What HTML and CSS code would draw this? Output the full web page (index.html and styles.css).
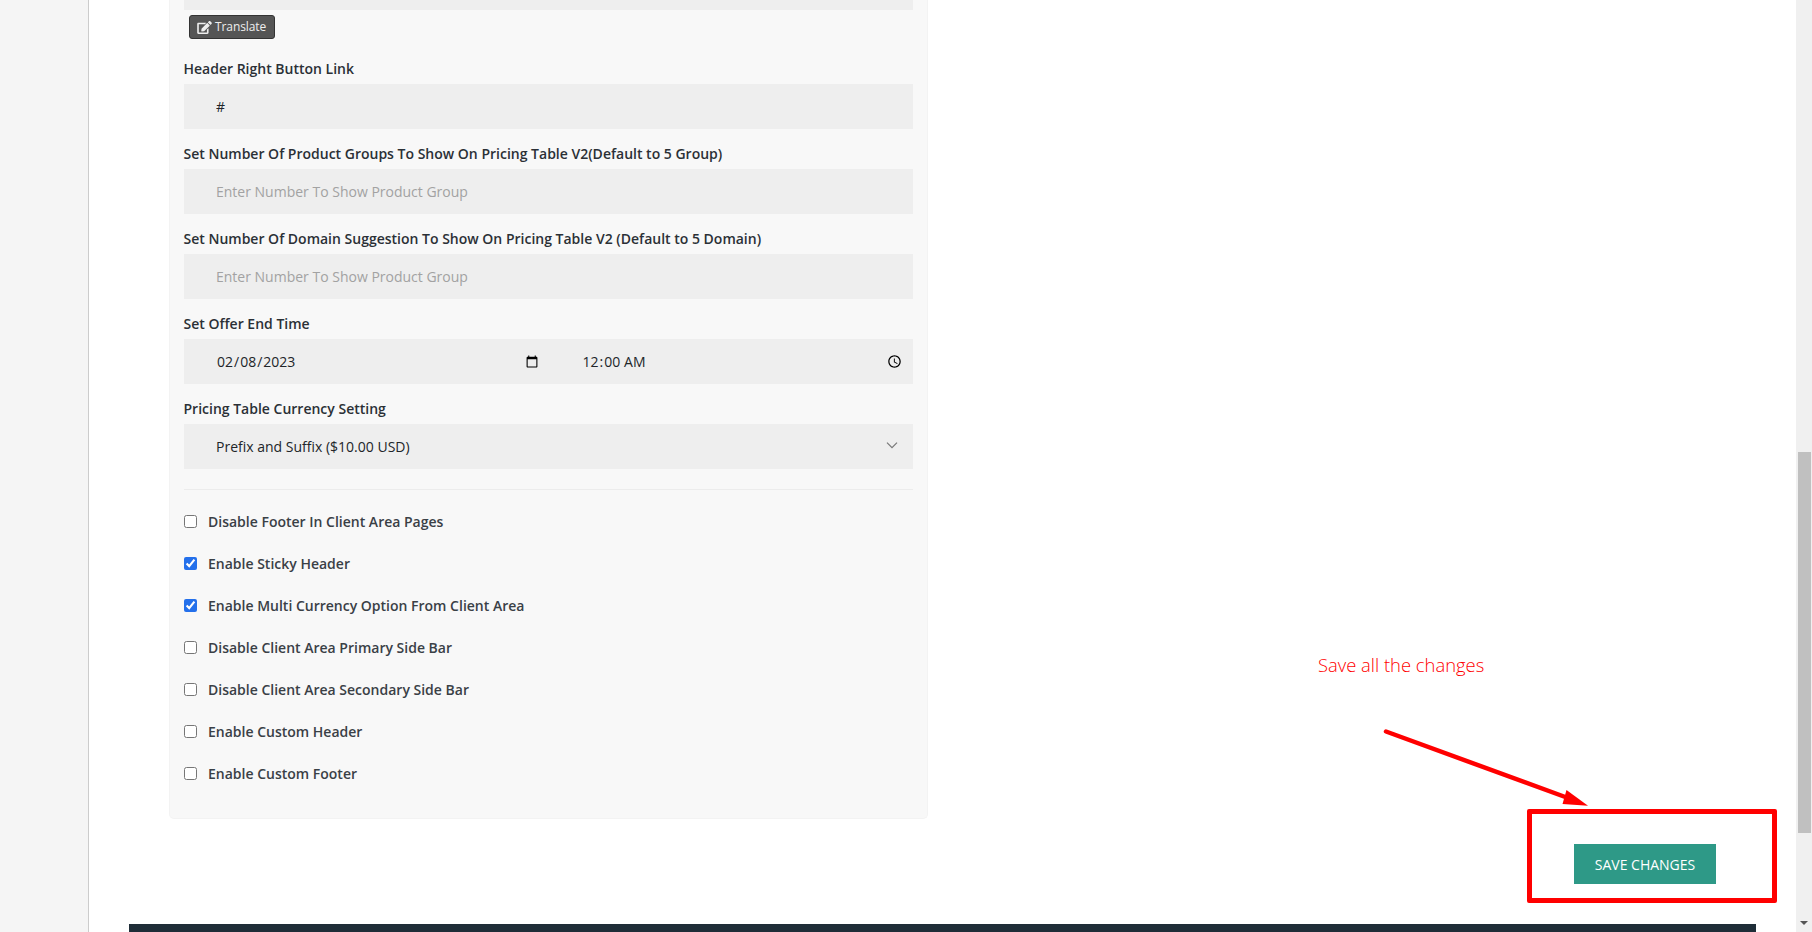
FILE: index.html
```html
<!DOCTYPE html>
<html lang="en">
<head>
<meta charset="utf-8">
<title>Settings</title>
<link rel="stylesheet" href="styles.css">
</head>
<body>
<div class="page">
  <div class="side"></div>
  <main class="main">
    <section class="panel">
      <div class="stub"></div>
      <button class="translate" type="button">
        <svg class="edit" viewBox="0 0 576 512"><path fill="currentColor" d="M402.6 83.2l90.2 90.2c3.8 3.8 3.8 10 0 13.8L274.4 405.6l-92.8 10.3c-12.4 1.4-22.9-9.1-21.5-21.5l10.3-92.8L388.8 83.2c3.8-3.8 10-3.8 13.8 0zm162-22.9l-48.8-48.8c-15.2-15.2-39.9-15.2-55.2 0l-35.4 35.4c-3.8 3.8-3.8 10 0 13.8l90.2 90.2c3.8 3.8 10 3.8 13.8 0l35.4-35.4c15.2-15.3 15.2-40 0-55.2zM384 346.2V448H64V128h229.8c3.2 0 6.2-1.3 8.5-3.5l40-40c7.6-7.6 2.2-20.5-8.5-20.5H48C21.5 64 0 85.5 0 112v352c0 26.5 21.5 48 48 48h352c26.5 0 48-21.5 48-48V306.2c0-10.7-12.9-16-20.5-8.5l-40 40c-2.2 2.3-3.5 5.3-3.5 8.5z"/></svg>
        <span class="translate-text">Translate</span>
      </button>
      <div class="group first">
        <label class="label">Header Right Button Link</label>
        <input class="field" type="text" value="#">
      </div>
      <div class="group">
        <label class="label">Set Number Of Product Groups To Show On Pricing Table V2(Default to 5 Group)</label>
        <input class="field" type="text" placeholder="Enter Number To Show Product Group">
      </div>
      <div class="group">
        <label class="label">Set Number Of Domain Suggestion To Show On Pricing Table V2 (Default to 5 Domain)</label>
        <input class="field" type="text" placeholder="Enter Number To Show Product Group">
      </div>
      <div class="group">
        <label class="label">Set Offer End Time</label>
        <div class="datetime">
          <input class="field" type="date" value="2023-02-08">
          <input class="field" type="time" value="00:00">
        </div>
      </div>
      <div class="group">
        <label class="label">Pricing Table Currency Setting</label>
        <div class="select-wrap">
          <select class="field select"><option>Prefix and Suffix ($10.00 USD)</option></select>
          <svg class="chevron" viewBox="0 0 16 16"><path d="M3 3.700l5 5 5-5" fill="none" stroke="#777" stroke-width="1.200"/></svg>
        </div>
      </div>
      <hr class="rule">
      <label class="check"><input type="checkbox">Disable Footer In Client Area Pages</label>
      <label class="check"><input type="checkbox" checked>Enable Sticky Header</label>
      <label class="check"><input type="checkbox" checked>Enable Multi Currency Option From Client Area</label>
      <label class="check"><input type="checkbox">Disable Client Area Primary Side Bar</label>
      <label class="check"><input type="checkbox">Disable Client Area Secondary Side Bar</label>
      <label class="check"><input type="checkbox">Enable Custom Header</label>
      <label class="check"><input type="checkbox">Enable Custom Footer</label>
    </section>
    <div class="actions"><button class="save" type="button">SAVE CHANGES</button></div>
    <footer class="footer"></footer>
  </main>
  <div class="scrollbar">
    <div class="thumb"></div>
    <div class="arrow"></div>
  </div>
</div>
<div class="note">Save all the changes</div>
<svg class="annotation" viewBox="0 0 1812 932">
  <path d="M1386 731.500L1568 798" fill="none" stroke="#f00" stroke-width="4.500" stroke-linecap="round"/>
  <path d="M1566.500 790L1588 805.700L1562.500 804Z" fill="#f00"/>
</svg>
<div class="callout"></div>
</body>
</html>
```
FILE: styles.css
```css
* { box-sizing: border-box; }
html, body { margin: 0; height: 932px; overflow: hidden; background: #fff; }
body { font-family: "Open Sans", sans-serif; font-size: 14px; line-height: 21px; color: #212529; }

.page { display: flex; height: 932px; }
.side { width: 89px; flex: none; background: #f5f5f5; border-right: 1px solid #ccc; }
.main { flex: 1; min-width: 0; padding-left: 80px; }

.panel {
  width: 759px;
  height: 819px;
  padding: 0 14px;
  background: #f8f8f8;
  border: 1px solid #f3f3f3;
  border-top: 0;
  border-radius: 0 0 5px 5px;
}
.stub { height: 10px; background: #eee; }
.translate {
  display: flex;
  align-items: center;
  gap: 3px;
  height: 24px;
  width: 86px;
  margin: 5px 0 0 5px;
  padding: 0 7px;
  background: #555;
  color: #eee;
  border: 1px solid #333;
  border-radius: 3px;
  font: 12px/20px "Open Sans", sans-serif;
}
.translate-text { letter-spacing: -0.1px; margin-top: -1px; }
.edit { width: 15px; height: 13px; flex: none; }

.group { margin-top: 14px; }
.group.first { margin-top: 19px; }
.label { display: block; margin-bottom: 5px; margin-left: -0.5px; font-weight: 600; color: #2b3036; }
.field {
  display: block;
  width: 100%;
  height: 45px;
  padding: 0 15px 0 32px;
  border: 0;
  border-radius: 0;
  outline: 0;
  background: #eee;
  color: #212529;
  font: 14px "Open Sans", sans-serif;
}
.field::placeholder { color: #a2a2a2; opacity: 1; }
.datetime { display: flex; }
.datetime .field { width: 50%; padding-right: 8px; }
.datetime .field + .field { padding-left: 33px; }
.select-wrap { position: relative; }
.select { appearance: none; }
.chevron { position: absolute; right: 13px; top: 15px; width: 16px; height: 16px; }

.rule { margin: 20px 0 21px; border: 0; border-top: 1px solid #ececec; }
.check { display: flex; align-items: center; height: 21px; margin-bottom: 21px; font-weight: 600; color: #3a4046; }
.check input { width: 13px; height: 13px; margin: 0 11px 0 0; flex: none; accent-color: #2470eb; }

.actions { display: flex; justify-content: flex-end; padding: 25px 80px 0 0; }
.save {
  width: 142px;
  height: 40px;
  padding: 0;
  border: 0;
  background: #2e9987;
  color: #fff;
  font: 14px "Open Sans", sans-serif;
}
.footer { height: 8px; margin: 40px 40px 0; margin-left: -40px; background: #1f2d38; }

.scrollbar { position: relative; width: 16px; flex: none; background: #f0f0f0; }
.thumb { width: 13px; height: 381px; margin: 452px 0 0 2px; background: #c0c0c0; }
.arrow {
  position: absolute;
  left: 4px;
  top: 921px;
  border: 4px solid transparent;
  border-top: 4px solid #555;
  border-bottom: 0;
}

.note {
  position: absolute;
  left: 1318px;
  top: 652px;
  font: 300 18.400px/26px "Open Sans", sans-serif;
  color: #f00;
}
.annotation { position: absolute; left: 0; top: 0; width: 1812px; height: 932px; pointer-events: none; }
.callout {
  position: absolute;
  left: 1527px;
  top: 809px;
  width: 250px;
  height: 94px;
  border: 5px solid #f00;
  border-radius: 2px;
}
```
